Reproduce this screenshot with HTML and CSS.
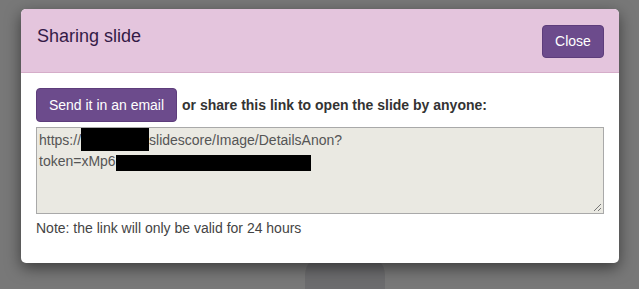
FILE: index.html
```html
<!DOCTYPE html>
<html>
<head>
<meta charset="utf-8">
<link rel="stylesheet" href="styles.css">
</head>
<body>
<div class="backdrop">
  <div class="photo"></div>
  <div class="modal">
    <div class="modal-header">
      <h4 class="modal-title">Sharing slide</h4>
      <button class="btn btn-close">Close</button>
    </div>
    <div class="modal-body">
      <div class="share-row">
        <button class="btn btn-send">Send it in an email</button>
        <span class="share-label">or share this link to open the slide by anyone:</span>
      </div>
      <div class="link-box">
        <div class="link-line">https://<span class="redact redact-host"></span>slidescore/Image/DetailsAnon?</div>
        <div class="link-line">token=xMp6<span class="redact redact-token"></span></div>
        <svg class="grip" width="9" height="9" viewBox="0 0 9 9"><path d="M8 1 L1 8 M8 5 L5 8" stroke="#777" stroke-width="1"/></svg>
      </div>
      <p class="note">Note: the link will only be valid for 24 hours</p>
    </div>
  </div>
</div>
</body>
</html>
```

FILE: styles.css
```css
html, body {
  margin: 0;
  padding: 0;
}
body {
  background: #787878;
  font-family: "Liberation Sans", Arial, sans-serif;
  width: 639px;
  height: 289px;
  overflow: hidden;
}
.backdrop {
  position: relative;
  height: 289px;
  padding: 9px 0 0 21px;
  box-sizing: border-box;
}
.photo {
  position: absolute;
  left: 305px;
  top: 255px;
  width: 80px;
  height: 40px;
  background: #6c6c6e;
  border-radius: 20px 20px 0 0;
}
.modal {
  position: relative;
  width: 598px;
  height: 254px;
  background: #fff;
  border-radius: 5px;
  box-shadow: 0 5px 15px rgba(0, 0, 0, 0.5);
  overflow: hidden;
}
.modal-header {
  display: flex;
  align-items: center;
  justify-content: space-between;
  height: 63px;
  padding: 0 15px 0 16px;
  background: #e4c5dd;
  border-bottom: 1px solid #d5adc9;
}
.modal-title {
  margin: 0 0 8px 0;
  font-size: 18px;
  font-weight: normal;
  color: #341a47;
}
.btn {
  font-family: "Liberation Sans", Arial, sans-serif;
  font-size: 14px;
  color: #fff;
  background: #6c4b8c;
  border: 1px solid #5d3d7b;
  border-radius: 4px;
  cursor: pointer;
}
.btn-close {
  width: 62px;
  height: 33px;
  padding: 0;
  margin-top: 1px;
}
.modal-body {
  padding: 15px 15px 0 15px;
}
.share-row {
  display: flex;
  align-items: center;
  gap: 5px;
}
.btn-send {
  width: 141px;
  height: 34px;
  padding: 0;
}
.share-label {
  font-size: 14px;
  font-weight: bold;
  color: #333;
  margin-top: 0;
}
.link-box {
  position: relative;
  margin-top: 5px;
  height: 83px;
  background: #eae9e2;
  border: 1px solid #a9a9a9;
  padding: 2px 2px 0 2px;
  font-size: 14px;
  color: #555;
  line-height: 21px;
}
.link-line {
  height: 21px;
  white-space: nowrap;
}
.redact {
  display: inline-block;
  background: #000;
  vertical-align: top;
}
.redact-host {
  width: 68px;
  height: 23px;
  margin-top: -2px;
}
.redact-token {
  width: 195px;
  height: 16px;
  margin-top: 4px;
}
.grip {
  position: absolute;
  right: 1px;
  bottom: 1px;
}
.note {
  margin: 6px 0 0 0;
  font-size: 14px;
  color: #444;
}
```
